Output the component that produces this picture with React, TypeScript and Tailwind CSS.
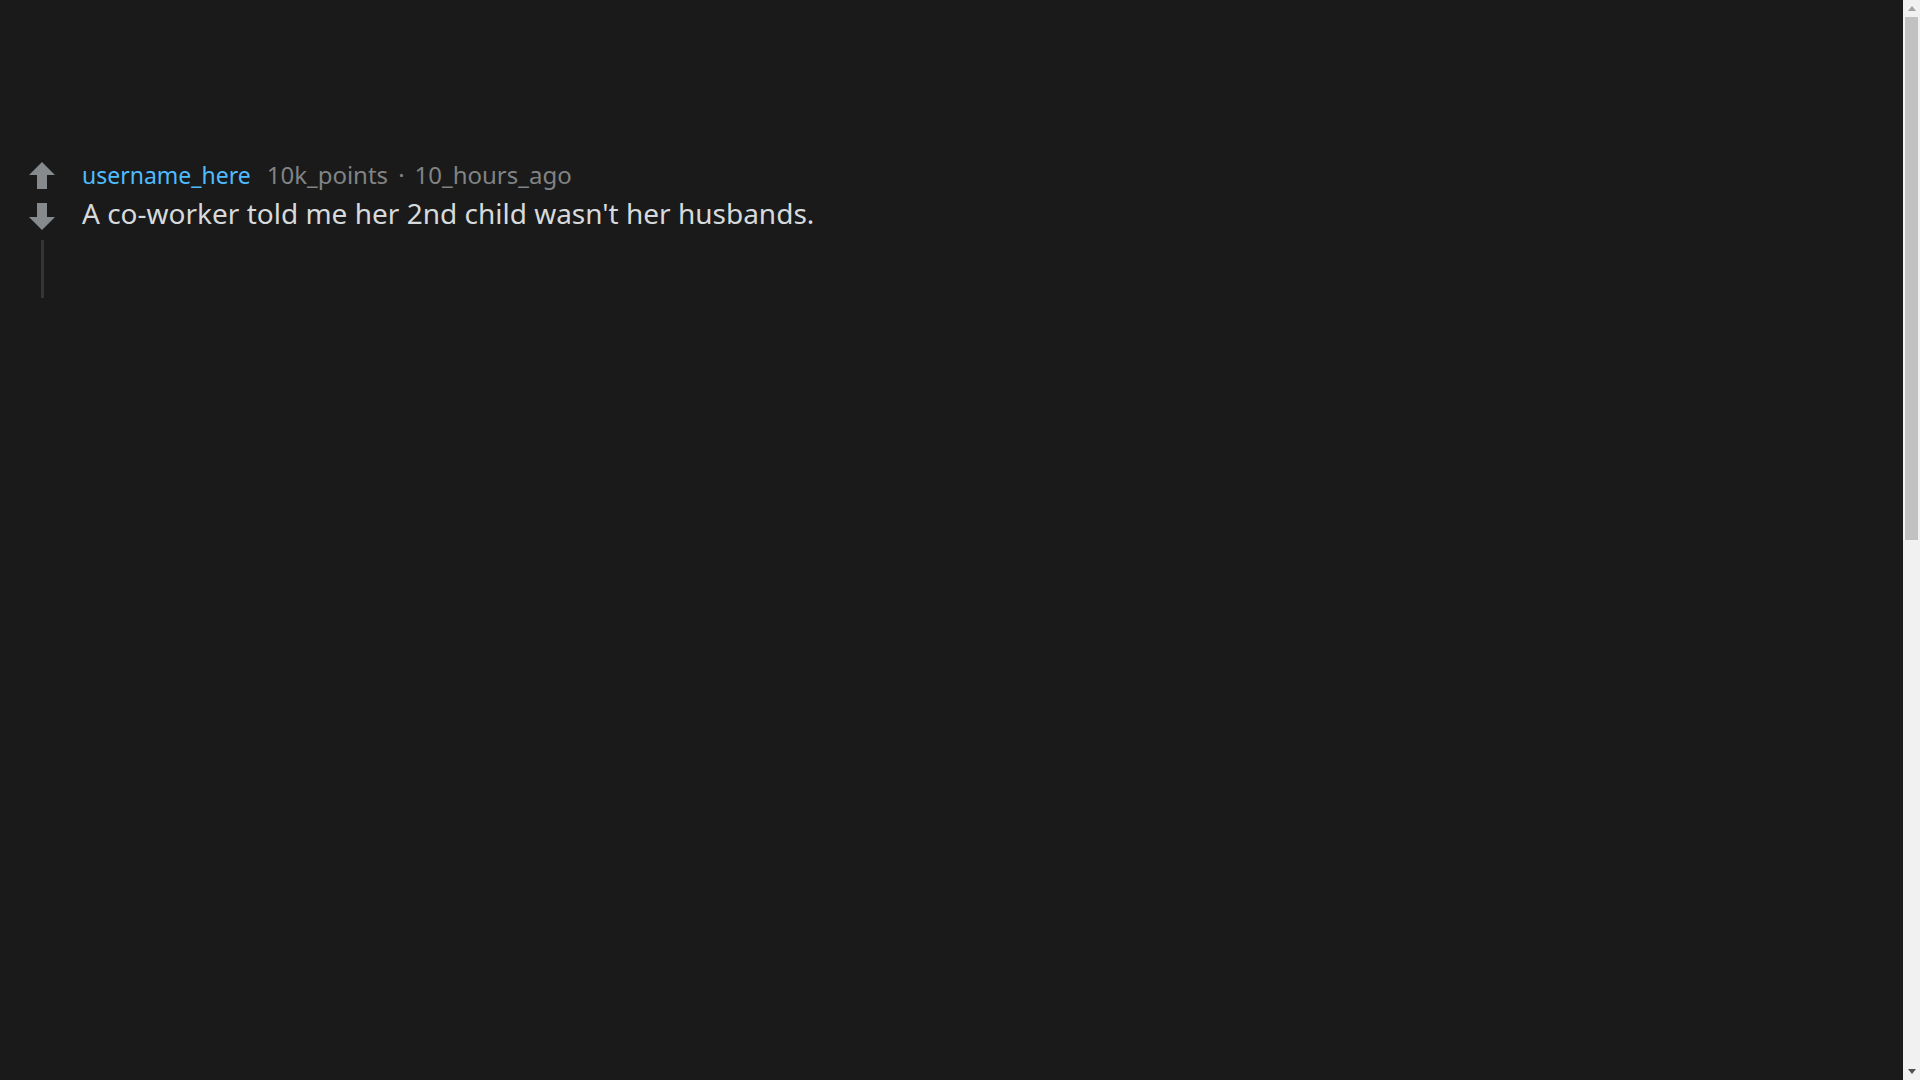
import React from "react";

function Arrow({ down = false }: { down?: boolean }) {
  return (
    <svg width="26" height="27" viewBox="0 0 26 27" className={down ? "rotate-180" : ""}>
      <path d="M13 0 L26 13 L18 13 L18 27 L8 27 L8 13 L0 13 Z" fill="#878a8c" />
    </svg>
  );
}

function Scrollbar() {
  return (
    <div className="w-[17px] h-full bg-[#f1f1f1] flex flex-col items-center shrink-0">
      <div className="h-[17px] w-full flex items-center justify-center">
        <svg width="8" height="5" viewBox="0 0 8 5">
          <path d="M4 0 L8 5 L0 5 Z" fill="#a3a3a3" />
        </svg>
      </div>
      <div className="flex-1 w-full flex flex-col items-center">
        <div className="w-[13px] h-[523px] bg-[#c1c1c1]" />
      </div>
      <div className="h-[17px] w-full flex items-center justify-center">
        <svg width="8" height="5" viewBox="0 0 8 5">
          <path d="M0 0 L8 0 L4 5 Z" fill="#505050" />
        </svg>
      </div>
    </div>
  );
}

export default function App() {
  return (
    <div
      className="h-screen flex overflow-hidden bg-[#1a1a1a] text-[#d7dadc]"
      style={{ fontFamily: '"Noto Sans", "Open Sans", sans-serif' }}
    >
      <div className="flex-1">
        <div className="pt-[160px] pl-[29px] flex gap-[27px]">
          <div className="flex flex-col items-center w-[26px]">
            <div className="mt-[2px]"><Arrow /></div>
            <div className="mt-[14px]"><Arrow down /></div>
            <div className="mt-[10px] w-[3px] h-[58px] bg-[#343536]" />
          </div>
          <div className="flex flex-col">
            <div className="flex items-baseline leading-[30px]">
              <span className="text-[23px] text-[#4fbcff]">username_here</span>
              <span className="ml-[16px] text-[24px] text-[#818384]">10k_points</span>
              <span className="mx-[10px] text-[24px] text-[#818384]">·</span>
              <span className="text-[24px] text-[#818384]">10_hours_ago</span>
            </div>
            <div className="mt-[5px] text-[28px] leading-[36px]">
              A co-worker told me her 2nd child wasn't her husbands.
            </div>
          </div>
        </div>
      </div>
      <Scrollbar />
    </div>
  );
}
